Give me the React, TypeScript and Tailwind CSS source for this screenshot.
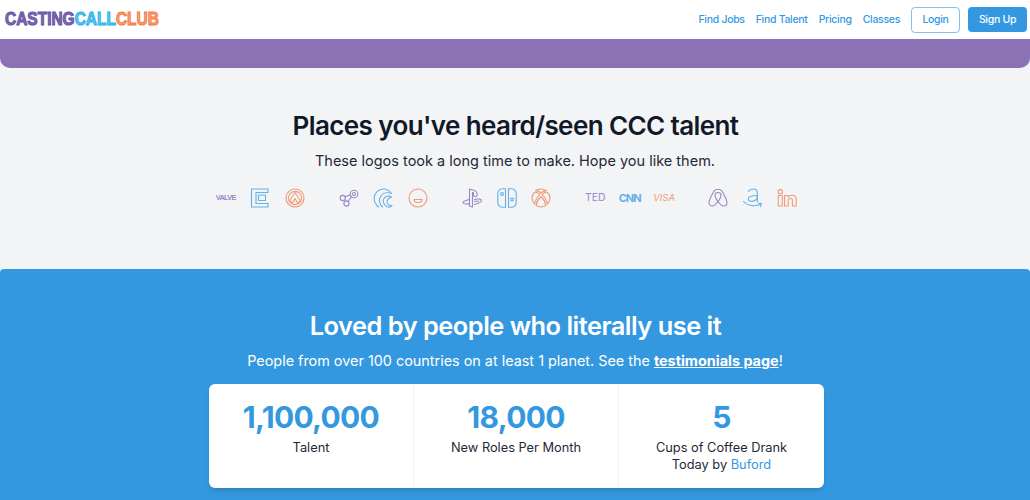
const purple = '#9a88c8'
const blue = '#66b0e8'
const orange = '#f09a78'

function Icon({ color, children, size = 20 }: { color: string; children: React.ReactNode; size?: number }) {
  return (
    <svg width={size} height={size} viewBox="0 0 20 20" fill="none" stroke={color} strokeWidth="1.1" strokeLinecap="round" strokeLinejoin="round">
      {children}
    </svg>
  )
}

function WordLogo({ label, className }: { label: string; className: string }) {
  return <span className={`flex h-5 w-5 items-center justify-center whitespace-nowrap ${className}`}>{label}</span>
}

const iconGroups = [
  [
    <WordLogo key="valve" label="VALVE" className="font-['Liberation_Sans',sans-serif] text-[7.500px] font-bold tracking-[-0.8px] text-[#9a88c8]" />,
    <Icon key="epic" color={blue}>
      <path d="M1.500 1h16.500v3.500H6v11h12V19H1.500z" />
      <rect x="8.500" y="7" width="7" height="5.500" />
    </Icon>,
    <Icon key="overwatch" color={orange}>
      <circle cx="10" cy="10" r="9" />
      <circle cx="10" cy="10" r="6.600" />
      <path d="M10 4.500l-5.500 8.500 3 2 2.500-4.500 2.500 4.500 3-2z" />
    </Icon>,
  ],
  [
    <Icon key="steam" color={purple}>
      <circle cx="15" cy="6" r="3.800" />
      <circle cx="15" cy="6" r="1.500" />
      <circle cx="3.800" cy="10" r="2.600" />
      <circle cx="7.500" cy="15.500" r="2.600" />
      <path d="M6 8.800l5.500-2M9 13.500l3.500-4.500M11.500 7.500l1 1.500" />
    </Icon>,
    <Icon key="wave" color={blue}>
      <path d="M18.500 5.500C16.500 2.700 13.500 1 10.500 1 5.500 1 1.200 5 1.200 10.500c0 3.500 1.800 6.500 4.500 8.500" />
      <path d="M18.500 5.500c-3.500-1.500-8-1-10.500 2.500-2.500 3.500-2 8 1.500 11" />
      <path d="M18.500 9c-2.500-1.500-6-1-7.500 1.500-1.500 2.500-.5 6 2.500 8 2.500 1.200 4.500.5 5.500-1-3 .5-5-1.500-5-3.500s2-4 4.500-5z" />
    </Icon>,
    <Icon key="smile" color={orange}>
      <circle cx="10" cy="10" r="9" />
      <path d="M6 11.500h8c0 2-1.800 3-4 3s-4-1-4-3z" />
    </Icon>,
  ],
  [
    <Icon key="playstation" color={purple}>
      <path d="M7.500 1l5.500 1.800c2.800 1 3 6 .2 6-1 0-1.700-.6-1.700-1.800V4.800L10.500 4.500V19L7.500 18z" />
      <path d="M7 11.500l-4.800 1.700c-1.900.9-1.200 2.500 1 2.800 1.300.1 2.700 0 3.800-.5" />
      <path d="M12.500 11.400c2.500-.8 7-.6 7 1.300 0 1.500-3.500 2.800-7 3.800" />
      <path d="M12.500 13.500c1.500-.5 3-.6 4-.4" />
    </Icon>,
    <Icon key="switch" color={blue}>
      <path d="M8.500 .8H5.500A4.700 4.700 0 0 0 .8 5.500v9A4.700 4.700 0 0 0 5.500 19.200h3z" />
      <path d="M11.500 .8h3A4.700 4.700 0 0 1 19.200 5.500v9a4.700 4.700 0 0 1-4.700 4.700h-3z" />
      <circle cx="5" cy="6" r="1.400" />
      <circle cx="15" cy="11.500" r="1.400" />
    </Icon>,
    <Icon key="xbox" color={orange}>
      <path d="M4.500 3C6 1.700 8 1 10 1s4 .7 5.500 2c-2-.5-4 .5-5.500 2C8.500 3.500 6.500 2.500 4.500 3z" />
      <path d="M3.500 4.500C1.800 6 1 8 1 10c0 2.500 1 4.500 2.500 6 .5-3 3-7 5.300-9.500-1.800-1.700-4-2.500-5.300-2z" />
      <path d="M16.500 4.500C18.200 6 19 8 19 10c0 2.500-1 4.500-2.500 6-.5-3-3-7-5.300-9.500 1.800-1.700 4-2.500 5.300-2z" />
      <path d="M10 8.500c-2 2-4.500 5.500-5 8.800C6.500 18.400 8.200 19 10 19s3.500-.6 5-1.700c-.5-3.300-3-6.800-5-8.800z" />
    </Icon>,
  ],
  [
    <WordLogo key="ted" label="TED" className="text-[10.500px] text-[#9a88c8]" />,
    <WordLogo key="cnn" label="CNN" className="text-[11px] font-bold tracking-[-1px] text-[#66b0e8]" />,
    <WordLogo key="visa" label="VISA" className="text-[9.500px] italic text-[#f09a78]" />,
  ],
  [
    <Icon key="airbnb" color={purple}>
      <path d="M10 13.500c-1.500-2-3-4.500-3-6.300C7 5.500 8.300 4.500 10 4.500s3 1 3 2.700c0 1.800-1.500 4.300-3 6.300z" />
      <path d="M10 13.500c-2 2.800-3.700 4.500-5.700 4.500-2 0-3.300-1.700-3.300-3.500 0-1.500 2.500-7 5-11.500C7 1.700 8.200 1.200 10 1.200s3 .5 4 1.800c2.500 4.500 5 10 5 11.500 0 1.800-1.300 3.500-3.300 3.500-2 0-3.700-1.700-5.700-4.500z" />
    </Icon>,
    <Icon key="amazon" color={blue}>
      <path d="M5.500 3.500C6.500 1.700 8.200 1 10.300 1c2.400 0 4 1.200 4 3.500V13.500" />
      <path d="M14.300 7.500c-4.500 0-9 .5-9 3.200 0 1.700 1.500 2.600 3.300 2.600 2.500 0 5.700-1.500 5.700-4.300" />
      <path d="M.5 13.500c4 4.500 11.500 5.500 17.500 2.500M15 15l3.500 .7-1 3" />
    </Icon>,
    <Icon key="linkedin" color={orange}>
      <circle cx="3.300" cy="3.800" r="2.200" />
      <rect x="1.300" y="7.500" width="4" height="10.500" />
      <path d="M7.500 7.500h3.700V9c1-1.300 2.300-1.800 3.700-1.800 3 0 4.300 2 4.300 4.800v6h-3.800v-5.500c0-1.500-.6-2.300-1.900-2.300s-2.300.9-2.300 2.400V18H7.500z" />
    </Icon>,
  ],
]

const stats = [
  { value: '1,100,000', label: <>Talent</> },
  { value: '18,000', label: <>New Roles Per Month</> },
  {
    value: '5',
    label: (
      <>
        Cups of Coffee Drank
        <br />
        Today by <a className="text-[#3498e0]">Buford</a>
      </>
    ),
  },
]

function App() {
  return (
    <div className="h-[500px] overflow-hidden bg-[#f3f4f6] font-['Inter','Noto_Sans',sans-serif] text-[#1f2937]">
      <header className="flex h-[39px] items-center justify-between bg-white pl-[5px] pr-[3px]">
        <a className="flex origin-left scale-x-[0.86] font-['Liberation_Sans',sans-serif] text-[18px] font-bold">
          <span className="text-[#7c6ab4] [-webkit-text-stroke:1px_#65539f]">CASTING</span>
          <span className="text-[#5cc8f0] [-webkit-text-stroke:1px_#27b0e8]">CALL</span>
          <span className="text-[#f7a27a] [-webkit-text-stroke:1px_#f3793f]">CLUB</span>
        </a>
        <nav className="flex items-center text-[10.500px] font-medium tracking-[-0.3px] text-[#3498e0]">
          <a className="mr-[11px]">Find Jobs</a>
          <a className="mr-[11px]">Find Talent</a>
          <a className="mr-[11px]">Pricing</a>
          <a className="mr-[11px]">Classes</a>
          <a className="mr-[8px] flex h-[26px] w-[49px] items-center justify-center rounded border border-[#3498e0]/60">Login</a>
          <a className="flex h-[25px] w-[59px] items-center justify-center rounded bg-[#3498e0] text-white">Sign Up</a>
        </nav>
      </header>
      <div className="h-[29px] rounded-b-[10px] bg-[#8a72b5]" />
      <section className="flex h-[201px] flex-col items-center pt-[40px]">
        <h2 className="ml-[1px] text-[26px] leading-[36px] font-semibold tracking-[-0.6px] text-[#111827]">Places you've heard/seen CCC talent</h2>
        <p className="mt-[5px] text-[14.500px] leading-[24px]">These logos took a long time to make. Hope you like them.</p>
        <div className="mt-[15px] flex gap-[34.400px] pr-[17px]">
          {iconGroups.map((group, i) => (
            <div className="flex gap-[14.400px]" key={i}>
              {group}
            </div>
          ))}
        </div>
      </section>
      <section className="flex h-[231px] flex-col items-center rounded-t-[4px] bg-[#3498e0] pt-[39px] text-white">
        <h2 className="ml-[1px] text-[25.400px] leading-[36px] font-semibold tracking-[-0.5px]">Loved by people who literally use it</h2>
        <p className="mt-[5px] text-[14.400px] leading-[24px]">
          People from over 100 countries on at least 1 planet. See the <a className="font-bold underline">testimonials page</a>!
        </p>
        <div className="mt-[11px] ml-[3px] grid h-[104px] w-[615px] grid-cols-[204px_205px_1fr] rounded-md bg-white shadow-md">
          {stats.map((stat, i) => (
            <div className={`flex flex-col items-center pt-[11px] ${i > 0 ? 'border-l border-[#f0f1f3]' : ''}`} key={stat.value}>
              <div className="text-[30px] leading-[44px] font-bold tracking-[-0.7px] text-[#3498e0]">{stat.value}</div>
              <div className="mt-[1px] text-center text-[12.800px] leading-[16.500px] text-[#1f2937]">{stat.label}</div>
            </div>
          ))}
        </div>
      </section>
    </div>
  )
}

export default App
